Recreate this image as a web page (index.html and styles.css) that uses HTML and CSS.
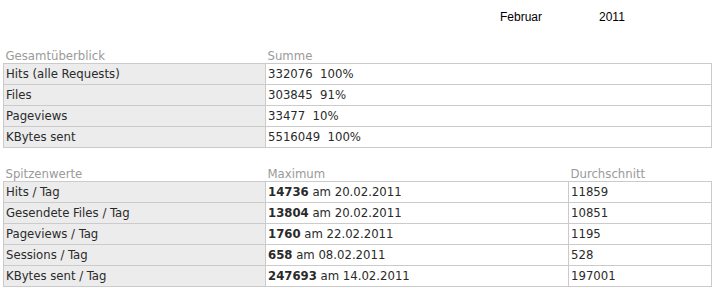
FILE: index.html
```html
<!DOCTYPE html>
<html>
<head>
<meta charset="utf-8">
<link rel="stylesheet" href="styles.css">
</head>
<body>
<div class="period">
  <span class="month">Februar</span>
  <span class="year">2011</span>
</div>

<table class="stats overview">
  <colgroup><col class="c1"><col></colgroup>
  <thead>
    <tr><th>Gesamtüberblick</th><th>Summe</th></tr>
  </thead>
  <tbody>
    <tr><td class="label">Hits (alle Requests)</td><td>332076&nbsp; 100%</td></tr>
    <tr><td class="label">Files</td><td>303845&nbsp; 91%</td></tr>
    <tr><td class="label">Pageviews</td><td>33477&nbsp; 10%</td></tr>
    <tr><td class="label">KBytes sent</td><td>5516049&nbsp; 100%</td></tr>
  </tbody>
</table>

<table class="stats peaks">
  <colgroup><col class="c1"><col class="c2"><col></colgroup>
  <thead>
    <tr><th>Spitzenwerte</th><th>Maximum</th><th>Durchschnitt</th></tr>
  </thead>
  <tbody>
    <tr><td class="label">Hits / Tag</td><td><b>14736</b> am 20.02.2011</td><td>11859</td></tr>
    <tr><td class="label">Gesendete Files / Tag</td><td><b>13804</b> am 20.02.2011</td><td>10851</td></tr>
    <tr><td class="label">Pageviews / Tag</td><td><b>1760</b> am 22.02.2011</td><td>1195</td></tr>
    <tr><td class="label">Sessions / Tag</td><td><b>658</b> am 08.02.2011</td><td>528</td></tr>
    <tr><td class="label">KBytes sent / Tag</td><td><b>247693</b> am 14.02.2011</td><td>197001</td></tr>
  </tbody>
</table>
</body>
</html>
```
FILE: styles.css
```css
html, body {
  margin: 0;
  padding: 0;
  background: #fff;
}
body {
  padding: 0 3px;
  font-family: "DejaVu Sans Condensed", "DejaVu Sans", sans-serif;
  font-size: 13px;
  color: #2a2a2a;
}
.period {
  display: flex;
  padding-left: 497px;
  padding-top: 9px;
  height: 49px;
  box-sizing: border-box;
  font-family: "Liberation Sans", Arial, sans-serif;
  font-size: 12px;
  line-height: 16px;
  color: #000;
}
.month {
  width: 99px;
}
.stats {
  width: 709px;
  border-collapse: collapse;
  table-layout: fixed;
}
.stats col.c1 {
  width: 262px;
}
.stats col.c2 {
  width: 303px;
}
.stats th {
  text-align: left;
  font-weight: normal;
  color: #9a9a9a;
  padding: 0 2px;
  height: 14px;
  line-height: 14px;
  vertical-align: bottom;
}
.stats td {
  border: 1px solid #cbcbcb;
  padding: 0 2px;
  height: 20px;
  line-height: 20px;
  white-space: nowrap;
}
.stats td.label {
  background: #ececec;
}
.peaks {
  margin-top: 19px;
}
```
